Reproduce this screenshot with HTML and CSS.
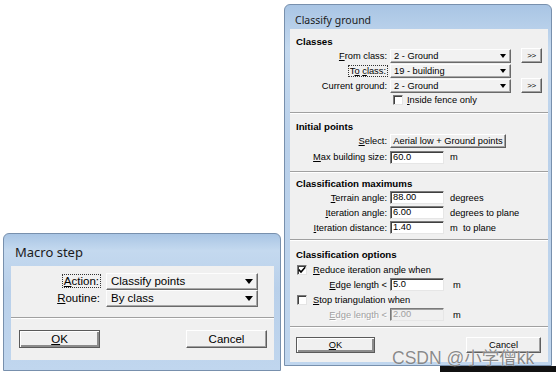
FILE: index.html
```html
<!DOCTYPE html>
<html lang="en">
<head>
    <meta charset="UTF-8">
    <title>Macro step / Classify ground</title>
    <link rel="stylesheet" href="styles.css">
</head>
<body>
    <div class="desk">
        <!-- left dialog -->
        <section class="win win-macro">
            <div class="win-title">Macro step</div>
            <div class="win-client">
                <div class="macro-fields">
                    <div class="lbl"><span class="focus"><u>A</u>ction:</span></div>
                    <div class="combo">Classify points<span class="arrow"></span></div>
                    <div class="lbl"><u>R</u>outine:</div>
                    <div class="combo">By class<span class="arrow"></span></div>
                </div>
                <div class="sep"></div>
                <div class="btn-row">
                    <button class="btn btn-default"><u>O</u>K</button>
                    <button class="btn">Cancel</button>
                </div>
            </div>
        </section>

        <!-- right dialog -->
        <section class="win win-ground">
            <div class="win-title">Classify ground</div>
            <div class="win-client small">
                <div class="sec sec-classes">
                    <div class="sec-head">Classes</div>
                    <div class="row">
                        <div class="lbl"><u>F</u>rom class:</div>
                        <div class="combo">2 - Ground<span class="arrow"></span></div>
                        <button class="btn btn-more">&gt;&gt;</button>
                    </div>
                    <div class="row">
                        <div class="lbl"><span class="focus">T<u>o</u> <u>c</u>lass:</span></div>
                        <div class="combo">19 - building<span class="arrow"></span></div>
                    </div>
                    <div class="row">
                        <div class="lbl">Current <u>g</u>round:</div>
                        <div class="combo">2 - Ground<span class="arrow"></span></div>
                        <button class="btn btn-more">&gt;&gt;</button>
                    </div>
                    <div class="row row-check row-fence">
                        <span class="check"></span>
                        <span><u>I</u>nside fence only</span>
                    </div>
                </div>
                <div class="sep"></div>

                <div class="sec sec-initial">
                    <div class="sec-head">Initial points</div>
                    <div class="row">
                        <div class="lbl"><u>S</u>elect:</div>
                        <button class="btn btn-select">Aerial low + Ground points</button>
                    </div>
                    <div class="row">
                        <div class="lbl"><u>M</u>ax building size:</div>
                        <div class="field">60.0</div>
                        <span class="unit">m</span>
                    </div>
                </div>
                <div class="sep"></div>

                <div class="sec sec-max">
                    <div class="sec-head">Classification maximums</div>
                    <div class="row">
                        <div class="lbl"><u>T</u>errain angle:</div>
                        <div class="field">88.00</div>
                        <span class="unit">degrees</span>
                    </div>
                    <div class="row">
                        <div class="lbl"><u>I</u>teration angle:</div>
                        <div class="field">6.00</div>
                        <span class="unit">degrees to plane</span>
                    </div>
                    <div class="row">
                        <div class="lbl"><u>I</u>teration distance:</div>
                        <div class="field">1.40</div>
                        <span class="unit">m&nbsp; to plane</span>
                    </div>
                </div>
                <div class="sep"></div>

                <div class="sec sec-options">
                    <div class="sec-head">Classification options</div>
                    <div class="row row-check">
                        <span class="check">
                            <svg width="8" height="8" viewBox="0 0 8 8"><polyline points="0.8,3.6 3,6 7.2,1.2" fill="none" stroke="#000" stroke-width="1.6"/></svg>
                        </span>
                        <span><u>R</u>educe iteration angle when</span>
                    </div>
                    <div class="row">
                        <div class="lbl"><u>E</u>dge length &lt;</div>
                        <div class="field">5.0</div>
                        <span class="unit unit-wide">m</span>
                    </div>
                    <div class="row row-check">
                        <span class="check"></span>
                        <span><u>S</u>top triangulation when</span>
                    </div>
                    <div class="row">
                        <div class="lbl disabled"><u>E</u>dge length &lt;</div>
                        <div class="field field-off">2.00</div>
                        <span class="unit unit-wide">m</span>
                    </div>
                </div>
                <div class="sep"></div>

                <div class="btn-row">
                    <button class="btn btn-default btn-ok"><u>O</u>K</button>
                    <button class="btn btn-cancel">Cancel</button>
                </div>
            </div>
        </section>

        <div class="taskbar"></div>
        <div class="watermark">CSDN @小学僧kk</div>
    </div>
</body>
</html>
```

FILE: styles.css
```css
body {
    margin: 0;
    background-color: #fff;
    font-family: "Liberation Sans", Arial, sans-serif;
    color: #000;
}

.desk {
    position: relative;
    width: 556px;
    height: 372px;
    overflow: hidden;
}

u {
    text-decoration-thickness: 1px;
    text-underline-offset: 1px;
}

/* window frame */
.win {
    position: absolute;
    box-sizing: border-box;
    border: 1px solid #7890ad;
    border-radius: 6px 6px 0 0;
    background: linear-gradient(#a9c5e4, #c4d9ef 12%, #b9d0ea 40%, #c0d6ee);
}

.win-title {
    font-family: "Noto Sans", "Open Sans", sans-serif;
    color: #1b1b1b;
    white-space: nowrap;
    overflow: hidden;
}

.win-client {
    background-color: #f0f0f0;
    font-size: 11.5px;
}

.win-macro {
    left: 3px;
    top: 233px;
    width: 278px;
    height: 138px;
    padding: 0 6px 0 7px;
}

.win-macro .win-title {
    height: 32px;
    line-height: 36px;
    padding-left: 4px;
    font-size: 13px;
}

.win-macro .win-client {
    height: 94px;
}

.win-ground {
    left: 284px;
    top: 4px;
    width: 268px;
    height: 362px;
    padding: 0 3px 0 5px;
}

.win-ground .win-title {
    height: 24px;
    line-height: 30px;
    padding-left: 5px;
    font-size: 10.5px;
}

.win-ground .win-client {
    height: 333px;
    font-size: 9.3px;
}

.sep {
    border-top: 1px solid #a0a0a0;
    border-bottom: 1px solid #fff;
}

/* controls */
.lbl {
    text-align: right;
    white-space: nowrap;
}

.focus {
    outline: 1px dotted #333;
    outline-offset: 0;
    padding: 0 1px;
}

.combo {
    position: relative;
    box-sizing: border-box;
    background-color: #f2f2f2;
    border: 1px solid;
    border-color: #fdfdfd #6a6a6a #6a6a6a #fdfdfd;
    box-shadow: inset -1px -1px #a8a8a8;
    white-space: nowrap;
}

.arrow {
    position: absolute;
    top: 50%;
    width: 0;
    height: 0;
    border-left: 4px solid transparent;
    border-right: 4px solid transparent;
    border-top: 5px solid #000;
}

.btn {
    box-sizing: border-box;
    margin: 0;
    padding: 0;
    font-family: inherit;
    font-size: inherit;
    color: #000;
    background-color: #f0f0f0;
    border: 1px solid;
    border-color: #fff #5e5e5e #5e5e5e #fff;
    box-shadow: inset -1px -1px #a0a0a0;
}

.btn-default {
    border: 1px solid #5a5a5a;
    box-shadow: inset 1px 1px #fff, inset -2px -2px #8c8c8c;
}

.btn-row {
    display: flex;
    justify-content: space-between;
}

/* Macro step */
.macro-fields {
    display: grid;
    grid-template-columns: 95px 152px;
    grid-auto-rows: 17px;
    align-items: center;
    padding: 7px 0 10px;
}

.macro-fields .lbl {
    padding-right: 6px;
    line-height: 17px;
}

.macro-fields .combo {
    height: 17px;
    line-height: 15px;
    padding-left: 4px;
}

.macro-fields .arrow {
    right: 4px;
    margin-top: -3px;
}

.win-macro .btn-row {
    padding: 11px 7px 0 8px;
}

.win-macro .btn {
    width: 81px;
    height: 18px;
}

/* Classify ground */
.sec {
    padding: 6px 0 6px 6px;
}

.sec-head {
    font-weight: bold;
    font-size: 9.7px;
    height: 13px;
    line-height: 13px;
}

.row {
    display: flex;
    align-items: center;
    height: 15px;
    white-space: nowrap;
}

.row .lbl {
    width: 94px;
    box-sizing: border-box;
    padding-right: 3px;
}

.row .combo {
    width: 121px;
    height: 14px;
    line-height: 12px;
    padding-left: 3px;
}

.row .arrow {
    right: 4px;
    margin-top: -2px;
    border-left-width: 3.5px;
    border-right-width: 3.5px;
    border-top-width: 4px;
}

.btn-more {
    width: 21px;
    height: 15px;
    margin-left: 10px;
    font-size: 8px;
    letter-spacing: -0.5px;
}

.row-check {
    height: 13px;
}

.row-fence {
    padding-left: 97px;
}

.check {
    box-sizing: border-box;
    width: 10px;
    height: 10px;
    margin-right: 4px;
    background-color: #fff;
    border: 1px solid;
    border-color: #7a7a7a #e4e4e4 #e4e4e4 #7a7a7a;
    box-shadow: inset 1px 1px #404040;
    display: flex;
    align-items: center;
    justify-content: center;
}

.sec-initial .row {
    height: 16px;
}

.btn-select {
    width: 116px;
    height: 14px;
    line-height: 12px;
}

.field {
    box-sizing: border-box;
    width: 54px;
    height: 13px;
    line-height: 11px;
    padding-left: 2px;
    background-color: #fff;
    border: 1px solid;
    border-color: #7a7a7a #e6e6e6 #e6e6e6 #7a7a7a;
    box-shadow: inset 1px 1px #404040;
}

.field-off {
    background-color: #f0f0f0;
    color: #a0a0a0;
    box-shadow: inset 1px 1px #a0a0a0;
}

.unit {
    margin-left: 6px;
}

.unit-wide {
    margin-left: 9px;
}

.disabled {
    color: #a0a0a0;
    text-shadow: 1px 1px #fff;
}

.sec-max {
    padding: 5px 0 4px 6px;
}

.sec-max .sec-head {
    height: 12px;
    line-height: 12px;
}

.sec-options {
    padding: 6px 0 4px 6px;
}

.sec-options .sec-head {
    height: 15px;
    line-height: 15px;
}

.sec-options .row {
    height: 15px;
}

.sec-options .row-check {
    padding-left: 1px;
}

.sec-options .check {
    margin-right: 6px;
}

.win-ground .btn-row {
    padding: 9px 7px 9px 6px;
}

.btn-ok {
    width: 79px;
    height: 16px;
}

.btn-cancel {
    width: 75px;
    height: 16px;
}

/* desktop bits */
.taskbar {
    position: absolute;
    left: 440px;
    top: 366px;
    width: 116px;
    height: 6px;
    background-color: #111;
}

.watermark {
    position: absolute;
    left: 392px;
    top: 344px;
    font-family: "Liberation Sans", "Noto Sans CJK SC", sans-serif;
    font-size: 17.5px;
    color: rgba(105, 105, 105, 0.78);
    text-shadow: 0 0 1px #fff;
    white-space: nowrap;
}
```
